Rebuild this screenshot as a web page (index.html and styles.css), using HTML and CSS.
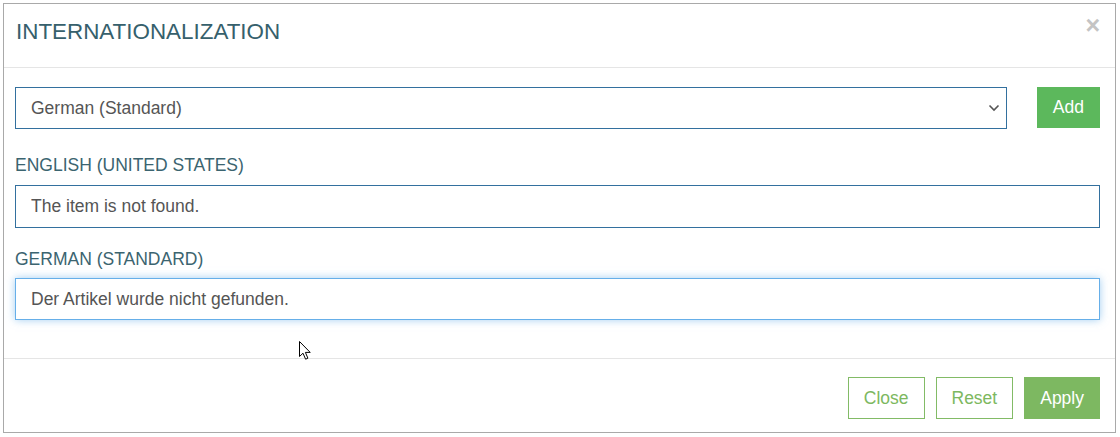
FILE: index.html
```html
<!DOCTYPE html>
<html lang="en">
<head>
    <meta charset="UTF-8">
    <meta name="viewport" content="width=device-width, initial-scale=1.0">
    <title>Internationalization</title>
    <link rel="stylesheet" href="styles.css">
</head>
<body>
    <div class="modal">
        <div class="modal-header">
            <h4 class="modal-title">INTERNATIONALIZATION</h4>
            <button type="button" class="close">&times;</button>
        </div>

        <div class="modal-body">
            <div class="lang-row">
                <div class="select-wrap">
                    <select class="form-control lang-select">
                        <option>German (Standard)</option>
                        <option>French (France)</option>
                        <option>Spanish (Spain)</option>
                    </select>
                    <svg class="chevron" width="12" height="8" viewBox="0 0 12 8">
                        <path d="M1.5 1.5 L6 6 L10.5 1.5" fill="none" stroke="#555" stroke-width="1.6"/>
                    </svg>
                </div>
                <button type="button" class="btn btn-add">Add</button>
            </div>

            <label class="lang-label" for="en">ENGLISH (UNITED STATES)</label>
            <input type="text" id="en" class="form-control tall" value="The item is not found.">

            <label class="lang-label second" for="de">GERMAN (STANDARD)</label>
            <input type="text" id="de" class="form-control focused" value="Der Artikel wurde nicht gefunden.">
        </div>

        <div class="modal-footer">
            <button type="button" class="btn btn-outline">Close</button>
            <button type="button" class="btn btn-outline">Reset</button>
            <button type="button" class="btn btn-apply">Apply</button>
        </div>

        <!-- mouse pointer from the screenshot -->
        <svg class="pointer" width="13" height="20" viewBox="0 0 13 20">
            <path d="M0.5 0.5 L0.5 15.5 L4 12.2 L6.6 18.2 L8.9 17.2 L6.4 11.4 L11.2 11.4 Z" fill="#fff" stroke="#000" stroke-width="1"/>
        </svg>
    </div>
</body>
</html>
```

FILE: styles.css
```css
body {
    margin: 0;
    background-color: #fff;
    font-family: "Liberation Sans", Arial, sans-serif;
    font-size: 17.5px;
    color: #555;
}

.modal {
    position: relative;
    margin: 3px 0 0 3px;
    width: 1113px;
    box-sizing: border-box;
    border: 1px solid #a9a9a9;
    background-color: #fff;
}

.modal-header {
    display: flex;
    justify-content: space-between;
    align-items: flex-start;
    padding: 14px 15px 21px 12px;
    border-bottom: 1px solid #e5e5e5;
}

.modal-title {
    margin: 0;
    font-size: 22.4px;
    font-weight: normal;
    line-height: 28px;
    color: #36606c;
}

.close {
    margin-top: -5px;
    padding: 0;
    border: none;
    background: none;
    font-family: "Liberation Sans", Arial, sans-serif;
    font-size: 25px;
    font-weight: bold;
    line-height: 1;
    color: #c4c4c4;
    cursor: pointer;
}

.modal-body {
    padding: 19px 15px 38px 11px;
}

.lang-row {
    display: flex;
    gap: 30px;
}

.select-wrap {
    position: relative;
    flex: 1;
}

.form-control {
    display: block;
    width: 100%;
    height: 42px;
    box-sizing: border-box;
    padding: 0 15px;
    border: 1px solid #33709e;
    border-radius: 0;
    background-color: #fff;
    font-family: "Liberation Sans", Arial, sans-serif;
    font-size: 17.5px;
    color: #555;
    outline: none;
}

.lang-select {
    appearance: none;
    -webkit-appearance: none;
}

.chevron {
    position: absolute;
    right: 7px;
    top: 17px;
    pointer-events: none;
}

.form-control.tall {
    height: 43px;
}

.form-control.focused {
    border-color: #66afe9;
    box-shadow: 0 0 8px rgba(102, 175, 233, 0.6);
}

.lang-label {
    display: block;
    margin: 24px 0 8px 0;
    line-height: 24px;
    color: #3b6470;
}

.lang-label.second {
    margin: 19px 0 7px 0;
}

.btn {
    height: 42px;
    padding: 0 15px;
    border: 1px solid transparent;
    border-radius: 0;
    font-family: "Liberation Sans", Arial, sans-serif;
    font-size: 17.5px;
    cursor: pointer;
}

.btn-add {
    height: 41px;
    background-color: #5cb85c;
    border-color: #5cb85c;
    color: #fff;
}

.modal-footer {
    display: flex;
    justify-content: flex-end;
    gap: 11px;
    padding: 18px 15px 13px;
    border-top: 1px solid #e5e5e5;
}

.btn-outline {
    background-color: #fff;
    border-color: #82bb66;
    color: #7db860;
}

.btn-apply {
    background-color: #7db861;
    border-color: #7db861;
    color: #fff;
}

.pointer {
    position: absolute;
    left: 295px;
    top: 337px;
}
```
